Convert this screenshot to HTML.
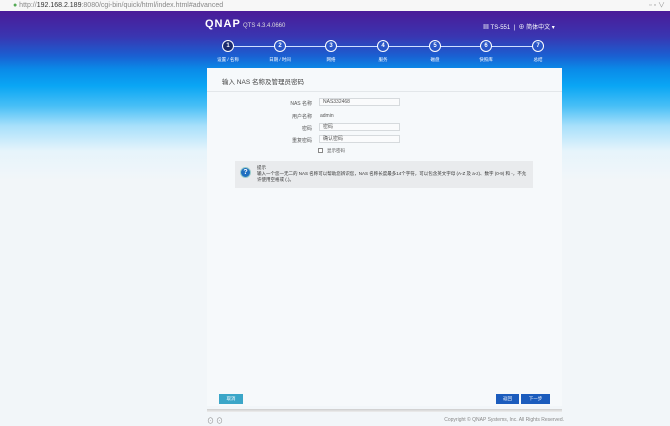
<!DOCTYPE html>
<html><head><meta charset="utf-8"><style>
*{margin:0;padding:0;box-sizing:border-box}
body{width:670px;height:424px;overflow:hidden;font-family:"Liberation Sans","Noto Sans CJK SC",sans-serif;position:relative;background:#f2f6f9}
.bar{position:absolute;left:0;top:0;width:670px;height:11px;background:#f7f7f7;font-size:7px;color:#888;line-height:11px;padding-left:13px}
.bar b{color:#333;font-weight:normal}
.bg{position:absolute;left:0;top:11px;width:670px;height:170px;background:linear-gradient(#4b1b98 0px,#3a35b0 25px,#1a60d2 45px,#0a8ae8 58px,#0aa6f4 75px,#48bff6 95px,#a8e0fb 115px,#e6f4fb 140px,#f2f6f9 170px)}
.logo{position:absolute;left:205px;top:18px;color:#fff;font-weight:bold;font-size:11px;letter-spacing:1px}
.ver{position:absolute;left:243px;top:23px;color:#ddd;font-size:6px}
.tr{position:absolute;left:483px;top:22px;color:#fff;font-size:6px}
.line{position:absolute;left:228px;top:46px;width:310px;height:1px;background:#cfe0ff}
.st{position:absolute;top:40px;width:12px;height:12px;border:1.3px solid #fff;border-radius:50%;color:#fff;font-size:6px;text-align:center;line-height:10px;font-weight:bold;background:#2a56c8}
.lb{position:absolute;top:57px;color:#fff;font-size:4.5px;width:40px;text-align:center}
.card{position:absolute;left:207px;top:68px;width:355px;height:338px;background:#f6f9fb}
.title{position:absolute;left:222px;top:76px;font-size:6.5px;color:#444}
.sep{position:absolute;left:207px;top:91px;width:355px;height:1px;background:#e3e7ea}
.l{position:absolute;width:60px;left:252px;text-align:right;font-size:5px;color:#555}
.in{position:absolute;left:319px;width:81px;height:8px;border:1px solid #d6dadd;background:#fafbfc;font-size:5px;color:#555;padding-left:3px;line-height:6px}
.tip{position:absolute;left:235px;top:161px;width:298px;height:27px;background:#e9ebed}
.tip .ic{position:absolute;left:5px;top:6px;width:11px;height:11px;border-radius:50%;background:#1f6fc0;border:1px solid #9cc;color:#fff;font-size:7px;text-align:center;line-height:9px;font-weight:bold}
.tip .t{position:absolute;left:22px;top:4px;font-size:4.5px;color:#333;line-height:6px;width:270px}
.btn{position:absolute;top:394px;height:10px;font-size:4.5px;color:#fff;text-align:center;line-height:10px}
.foot{position:absolute;left:207px;top:409px;width:355px;height:3px;background:linear-gradient(#ccc,#eee)}
.copy{position:absolute;right:106px;top:417px;font-size:5px;color:#888}
</style></head><body>
<div class="bar"><span style="color:#5a5">●</span> http://<b>192.168.2.189</b>:8080/cgi-bin/quick/html/index.html#advanced<span style="position:absolute;right:5px;color:#999">▫ ▫ ∨</span></div>
<div class="bg"></div>
<div class="logo">QNAP</div><div class="ver">QTS 4.3.4.0660</div>
<div class="tr">▦ TS-551 &nbsp;|&nbsp; ⊕ 简体中文 ▾</div>
<div class="line"></div>
<div class="st" style="left:222px;background:#1a2a6e">1</div>
<div class="st" style="left:274px">2</div><div class="st" style="left:325px">3</div><div class="st" style="left:377px">4</div><div class="st" style="left:429px">5</div><div class="st" style="left:480px">6</div><div class="st" style="left:532px">7</div>
<div class="lb" style="left:208px">设置 / 名称</div><div class="lb" style="left:260px">日期 / 时间</div><div class="lb" style="left:311px">网络</div><div class="lb" style="left:363px">服务</div><div class="lb" style="left:415px">磁盘</div><div class="lb" style="left:466px">快照库</div><div class="lb" style="left:518px">总结</div>
<div class="card"></div>
<div class="title">输入 NAS 名称及管理员密码</div>
<div class="sep"></div>
<div class="l" style="top:100px">NAS 名称</div><div class="in" style="top:98px">NAS332468</div>
<div class="l" style="top:113px">用户名称</div><div style="position:absolute;left:320px;top:113px;font-size:5px;color:#555">admin</div>
<div class="l" style="top:125px">密码</div><div class="in" style="top:123px">密码</div>
<div class="l" style="top:137px">重复密码</div><div class="in" style="top:135px">确认密码</div>
<div style="position:absolute;left:318px;top:148px;width:5px;height:5px;border:1px solid #888;background:#fff"></div>
<div style="position:absolute;left:327px;top:148px;font-size:4.5px;color:#555">显示密码</div>
<div class="tip"><div class="ic">?</div><div class="t">提示<br>输入一个您一无二的 NAS 名称可以帮助您辨识您，NAS 名称长度最多14个字符，可以包含英文字母 (A-Z 及 a-z)、数字 (0-9) 和 -，不允许使用空格或 (.)。</div></div>
<div class="btn" style="left:219px;width:24px;background:#3ba6c8">取消</div>
<div class="btn" style="left:496px;width:23px;background:#1b5cbd">返回</div>
<div class="btn" style="left:521px;width:29px;background:#1b5cbd">下一步</div>
<div class="foot"></div>
<div style="position:absolute;left:207px;top:416px;font-size:7px;color:#888">⊙ ⊙</div>
<div class="copy">Copyright © QNAP Systems, Inc. All Rights Reserved.</div>
</body></html>
